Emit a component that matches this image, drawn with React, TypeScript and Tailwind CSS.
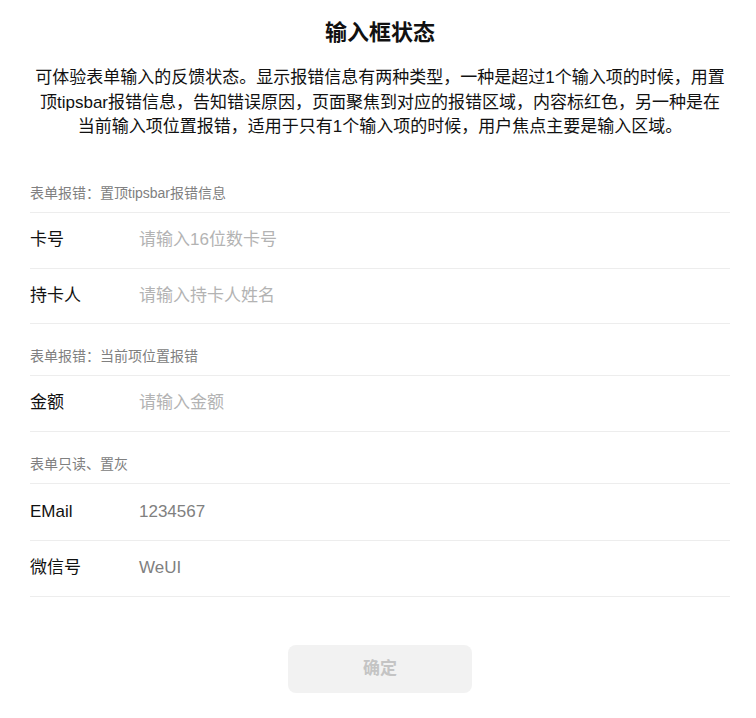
import React from 'react'

const font = { fontFamily: '"Liberation Sans", "Noto Sans CJK SC", sans-serif' }

type Row = { label: string; value?: string; placeholder?: string }

function SectionTitle({ children, top }: { children: React.ReactNode; top: string }) {
  return (
    <div className={`${top} pb-[10px] text-[14px] leading-[18px] text-[#808080]`}>
      {children}
    </div>
  )
}

function Group({ rows, readOnly }: { rows: Row[]; readOnly?: boolean }) {
  const h = readOnly ? 'h-[56px]' : 'h-[55px]'
  return (
    <div className="border-t border-b border-[#ededed]">
      {rows.map((r, i) => (
        <div key={r.label}
          className={`flex items-center ${h} ${i > 0 ? 'border-t border-[#ededed]' : ''}`}>
          <div className="w-[109px] shrink-0 text-[17px] text-[#111]">{r.label}</div>
          {readOnly ? (
            <div className="text-[17px] text-[#808080]">{r.value}</div>
          ) : (
            <input
              className="flex-1 outline-none bg-transparent text-[17px] text-[#111] placeholder:text-[#b3b3b3]"
              style={font}
              placeholder={r.placeholder}
            />
          )}
        </div>
      ))}
    </div>
  )
}

export default function App() {
  return (
    <div className="min-h-screen bg-white pl-[30px] pr-[26px]" style={font}>
      <h1 className="pt-[19px] text-center text-[22px] leading-[28px] font-bold text-[#111]">
        输入框状态
      </h1>
      <p className="mt-[19px] text-center text-[17px] leading-[24.5px] text-[#111] whitespace-nowrap">
        可体验表单输入的反馈状态。显示报错信息有两种类型，一种是超过1个输入项的时候，用置<br />
        顶tipsbar报错信息，告知错误原因，页面聚焦到对应的报错区域，内容标红色，另一种是在<br />
        当前输入项位置报错，适用于只有1个输入项的时候，用户焦点主要是输入区域。
      </p>

      <SectionTitle top="mt-[44px]">表单报错：置顶tipsbar报错信息</SectionTitle>
      <Group rows={[
        { label: '卡号', placeholder: '请输入16位数卡号' },
        { label: '持卡人', placeholder: '请输入持卡人姓名' },
      ]} />

      <SectionTitle top="mt-[23px]">表单报错：当前项位置报错</SectionTitle>
      <Group rows={[{ label: '金额', placeholder: '请输入金额' }]} />

      <SectionTitle top="mt-[23px]">表单只读、置灰</SectionTitle>
      <Group readOnly rows={[
        { label: 'EMail', value: '1234567' },
        { label: '微信号', value: 'WeUI' },
      ]} />

      <div className="mt-[48px] flex justify-center">
        <button disabled
          className="w-[184px] h-[48px] rounded-[8px] bg-[#f2f2f2] text-[17px] font-bold text-[#c4c4c4]"
          style={font}>
          确定
        </button>
      </div>
    </div>
  )
}
